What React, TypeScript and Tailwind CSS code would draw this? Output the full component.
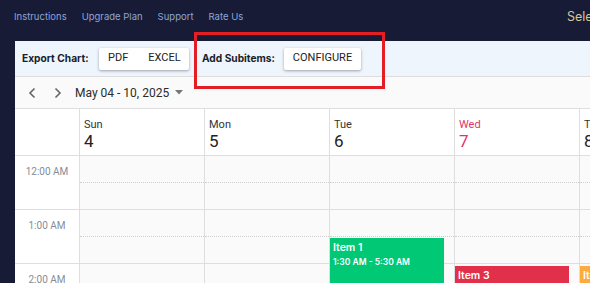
import React from 'react';

const days = [
  { name: 'Sun', num: '4' },
  { name: 'Mon', num: '5' },
  { name: 'Tue', num: '6' },
  { name: 'Wed', num: '7', today: true },
  { name: 'Thu', num: '8' },
];

const hours = ['12:00 AM', '1:00 AM', '2:00 AM'];

type Ev = { day: number; title: string; time?: string; top: number; color: string };

const events: Ev[] = [
  { day: 2, title: 'Item 1', time: '1:30 AM - 5:30 AM', top: 82, color: 'bg-[#00c875]' },
  { day: 3, title: 'Item 3', top: 110, color: 'bg-[#e2304a]' },
  { day: 4, title: 'Item 2', top: 110, color: 'bg-[#fdab3d]' },
];

const App = () => {
  return (
    <div
      className="w-[590px] h-[283px] overflow-hidden bg-[#171b36] flex flex-col relative"
      style={{ fontFamily: 'Roboto, "Liberation Sans", sans-serif' }}
    >
      {/* top nav */}
      <div
        className="h-[41px] shrink-0 flex items-center justify-between pl-[14px] pb-[7px]"
        style={{ fontFamily: 'Inter, "Noto Sans", sans-serif' }}
      >
        <div className="flex items-center gap-[15px] text-[9.5px] text-[#8ea6d6]">
          <span>Instructions</span>
          <span>Upgrade Plan</span>
          <span>Support</span>
          <span>Rate Us</span>
        </div>
        <span className="text-[12.5px] text-[#cfc89a] whitespace-nowrap w-[23px] overflow-hidden">Sele</span>
      </div>

      {/* main panel */}
      <div className="ml-[15px] flex-1 bg-white flex flex-col overflow-hidden">
        {/* toolbar */}
        <div className="h-[36px] shrink-0 bg-[#eef5fd] border-b border-[#dedede] flex items-center pl-[7px]">
          <span
            className="text-[10.2px] font-bold text-[#1a1d29] w-[77px]"
            style={{ fontFamily: 'Inter, "Noto Sans", sans-serif' }}
          >
            Export Chart:
          </span>
          <div className="h-[22px] w-[90px] bg-white shadow-[0_1px_3px_rgba(0,0,0,0.35)] rounded-[2px] flex items-center text-[11px] text-[#222]">
            <span className="pl-[9px]">PDF</span>
            <span className="pl-[20px]">EXCEL</span>
          </div>
          <span
            className="ml-[13px] w-[82px] text-[10.2px] font-bold text-[#1a1d29]"
            style={{ fontFamily: 'Inter, "Noto Sans", sans-serif' }}
          >
            Add Subitems:
          </span>
          <div className="h-[22px] w-[77px] bg-white shadow-[0_1px_3px_rgba(0,0,0,0.35)] rounded-[2px] flex items-center justify-center text-[11px] text-[#222]">
            CONFIGURE
          </div>
        </div>

        {/* date nav */}
        <div className="h-[32px] shrink-0 bg-[#fafafa] border-b border-[#dedede] flex items-center pl-[12px] text-[#555]">
          <svg width="11" height="12" viewBox="0 0 11 12" fill="none" stroke="#666" strokeWidth="1.6">
            <path d="M7.5 1.5 L3 6 L7.5 10.5" />
          </svg>
          <svg className="ml-[14px]" width="11" height="12" viewBox="0 0 11 12" fill="none" stroke="#666" strokeWidth="1.6">
            <path d="M3.5 1.5 L8 6 L3.5 10.5" />
          </svg>
          <span className="ml-[12px] text-[12px] text-[#2b2b2b]">May 04 - 10, 2025</span>
          <svg className="ml-[6px]" width="8" height="5" viewBox="0 0 8 5">
            <path d="M0 0 L8 0 L4 4.5 Z" fill="#777" />
          </svg>
        </div>

        {/* header row */}
        <div className="h-[47px] shrink-0 flex border-b border-[#dedede]">
          <div className="w-[65px] shrink-0 border-r border-[#dedede]" />
          {days.map((d) => (
            <div key={d.name} className="w-[125px] shrink-0 border-r border-[#dedede] pl-[4px] pt-[9px]">
              <div className={`text-[11px] leading-[13px] ${d.today ? 'text-[#e2336b]' : 'text-[#333]'}`}>{d.name}</div>
              <div className={`text-[17px] leading-[20px] ${d.today ? 'text-[#e2336b]' : 'text-[#222]'}`}>{d.num}</div>
            </div>
          ))}
        </div>

        {/* body */}
        <div className="flex flex-1">
          <div className="w-[65px] shrink-0 border-r border-[#dedede] bg-white">
            {hours.map((h) => (
              <div key={h} className="h-[54px] border-b border-[#dedede] pt-[8px] text-center text-[10px] text-[#858c96]">
                {h}
              </div>
            ))}
          </div>
          {days.map((d, i) => (
            <div key={d.name} className="w-[125px] shrink-0 border-r border-[#dedede] bg-[#fafafa] relative">
              {hours.map((h) => (
                <div key={h} className="h-[54px] border-b border-[#dedede] flex flex-col">
                  <div className="h-[27px] border-b border-dotted border-[#cfcfcf]" />
                </div>
              ))}
              {events
                .filter((e) => e.day === i)
                .map((e) => (
                  <div
                    key={e.title}
                    className={`absolute left-0 w-[114px] h-[120px] ${e.color} text-white px-[3px] pt-[3px]`}
                    style={{ top: e.top, fontFamily: 'Inter, "Noto Sans", sans-serif' }}
                  >
                    <div className="text-[10.5px] font-semibold leading-[14px]">{e.title}</div>
                    {e.time && <div className="text-[8.5px] font-semibold leading-[12px] mt-[1px]">{e.time}</div>}
                  </div>
                ))}
            </div>
          ))}
        </div>
      </div>

      {/* annotation box */}
      <div className="absolute left-[194px] top-[32px] w-[191px] h-[57px] border-[3px] border-[#e31e24] pointer-events-none" />
    </div>
  );
};

export default App;
